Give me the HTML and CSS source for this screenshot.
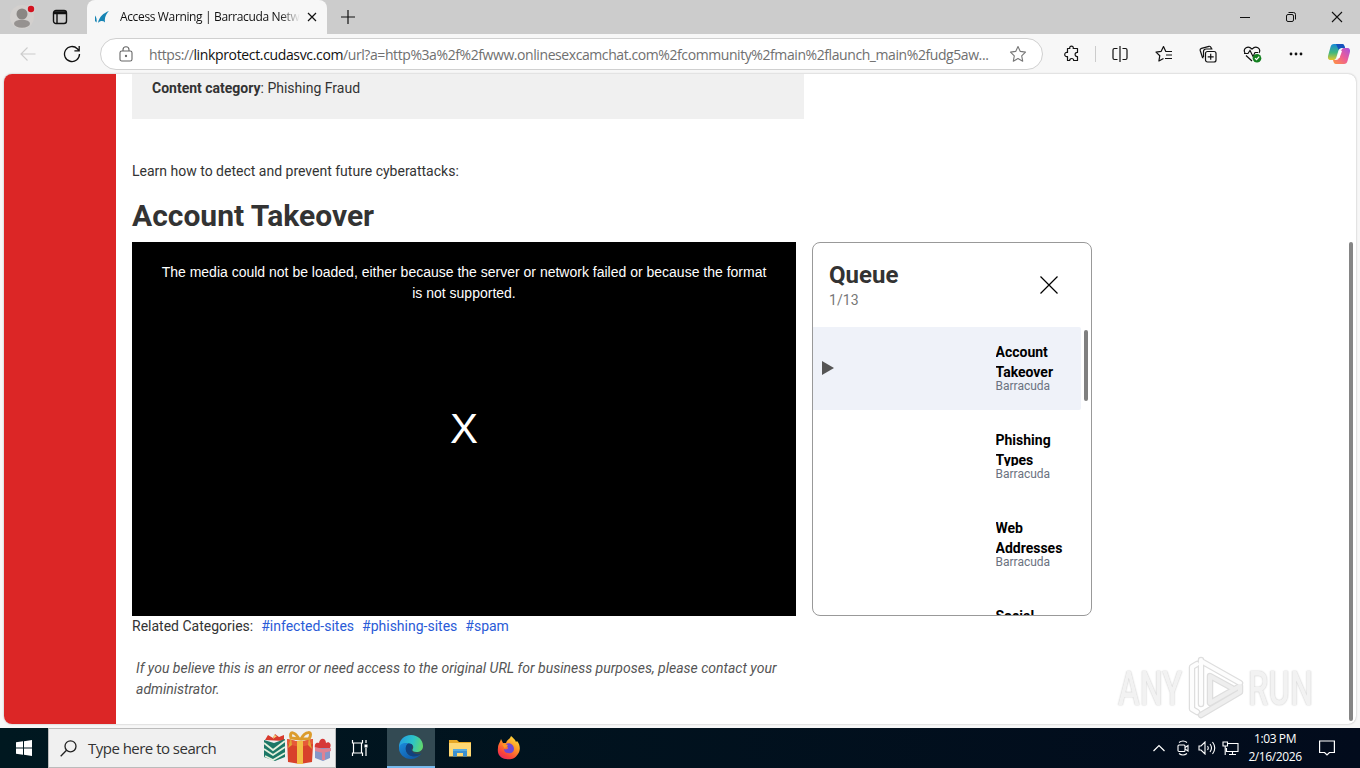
FILE: index.html
```html
<!DOCTYPE html>
<html lang="en">
<head>
    <meta charset="UTF-8">
    <meta name="viewport" content="width=device-width, initial-scale=1.0">
    <title>Access Warning | Barracuda Networks</title>
    <link rel="stylesheet" href="styles.css">
</head>
<body>

<!-- tab strip -->
<div class="tabbar">
    <div class="profile">
        <svg width="28" height="28" viewBox="0 0 28 28"><circle cx="14" cy="14" r="12" fill="#d3d0ce"/><circle cx="14" cy="11" r="5.500" fill="#8b8784"/><ellipse cx="14" cy="20.700" rx="8" ry="4" fill="#969290"/><circle cx="23" cy="6" r="4.500" fill="#d6d0d0"/><circle cx="23" cy="6" r="3.200" fill="#d3121f"/></svg>
    </div>
    <div class="workspaces">
        <svg width="16" height="16" viewBox="0 0 16 16" fill="none" stroke="#111" stroke-width="1.400"><rect x="1.500" y="1.500" width="13" height="13" rx="2.500"/><path d="M1.500 4.500h13M5 4.500v10"/><path d="M2 3.200h12" stroke-width="2"/></svg>
    </div>
    <div class="tab">
        <svg class="favicon" width="16" height="16" viewBox="0 0 16 16"><path d="M15 2C9.500 4 5 8 4 14C6.500 11.500 9 11.500 11 13.500C10.500 9 11.500 5.500 15 2z" fill="#1684b4"/><path d="M1 6.500C2.500 8.500 3 11 2.500 13.500L1 12z" fill="#1684b4"/></svg>
        <span class="tab-title">Access Warning | Barracuda Netw</span>
        <svg class="tab-close" width="10" height="10" viewBox="0 0 10 10" stroke="#111" stroke-width="1.200"><path d="M1 1l8 8M9 1l-8 8"/></svg>
    </div>
    <svg class="new-tab" width="14" height="14" viewBox="0 0 14 14" stroke="#111" stroke-width="1.200"><path d="M7 0v14M0 7h14"/></svg>
    <div class="window-buttons">
        <span><svg width="12" height="12" viewBox="0 0 12 12" stroke="#111"><path d="M1 6.500h10"/></svg></span>
        <span><svg width="12" height="12" viewBox="0 0 12 12" fill="none" stroke="#111"><rect x="1.500" y="3.500" width="7" height="7" rx="1.500"/><path d="M3.500 1.500h5a2 2 0 0 1 2 2v5"/></svg></span>
        <span><svg width="12" height="12" viewBox="0 0 12 12" stroke="#111" stroke-width="1.100"><path d="M1 1l10 10M11 1L1 11"/></svg></span>
    </div>
</div>

<!-- address bar -->
<div class="toolbar">
    <span class="tool back"><svg width="16" height="16" viewBox="0 0 16 16" fill="none" stroke="#ccc" stroke-width="1.100"><path d="M15.500 8H1M7.500 1.500L1 8l6.500 6.500"/></svg></span>
    <span class="tool"><svg width="18" height="18" viewBox="0 0 18 18" fill="none" stroke="#111" stroke-width="1.300"><path d="M16.500 9a7.500 7.500 0 1 1-2.200-5.300L16 5.500M16.200 1v4.800h-4.800"/></svg></span>
    <div class="address">
        <svg width="14" height="16" viewBox="0 0 14 16" fill="none" stroke="#666" stroke-width="1.100"><rect x="1" y="5" width="12" height="10" rx="1.800"/><path d="M4 5V3.800a3 3 0 0 1 6 0V5"/><circle cx="7" cy="10" r=".6" fill="#666"/></svg>
        <span class="url">https://<b>linkprotect.cudasvc.com</b>/url?a=http%3a%2f%2fwww.onlinesexcamchat.com%2fcommunity%2fmain%2flaunch_main%2fudg5aw...</span>
        <svg class="star" width="18" height="18" viewBox="0 0 18 18" fill="none" stroke="#777" stroke-width="1.100"><path d="M9 1.500l2.300 4.900 5.200.7-3.800 3.700 1 5.400L9 13.600l-4.700 2.600 1-5.400L1.500 7.100l5.200-.7z" stroke-linejoin="round"/></svg>
    </div>
    <span class="tool"><svg width="18" height="18" viewBox="0 0 18 18" fill="none" stroke="#111" stroke-width="1.200" stroke-linejoin="round"><path d="M4.500 3.500h2.300C6 .3 11 .3 10.200 3.500h4.300v4C11.300 7 11.300 12 14.500 11.500v4h-3.800c0-2.700-4-2.700-4 0H4.500v-4C.8 12.300.8 6.700 4.500 7.500z"/></svg></span>
    <span class="divider"></span>
    <span class="tool"><svg width="18" height="18" viewBox="0 0 18 18" fill="none" stroke="#111" stroke-width="1.200"><path d="M9 1v16M6.500 3.500h-3A1.500 1.500 0 0 0 2 5v8a1.500 1.500 0 0 0 1.500 1.500h3M11.500 3.500h3A1.500 1.500 0 0 1 16 5v8a1.500 1.500 0 0 1-1.500 1.500h-3"/></svg></span>
    <span class="tool"><svg width="18" height="18" viewBox="0 0 18 18" fill="none" stroke="#111" stroke-width="1.200" stroke-linejoin="round"><path d="M17 6.500h-6.200L8.500 1.500 6.200 6.300l-5.200.8 3.800 3.600-.9 5.300L8.500 13.500M11 10h6M10 13.500h7"/></svg></span>
    <span class="tool"><svg width="18" height="18" viewBox="0 0 18 18" fill="none" stroke="#111" stroke-width="1.200"><rect x="6.500" y="6.500" width="10.500" height="10.500" rx="2"/><path d="M11.700 8.800v6M8.700 11.800h6M4.500 13L3.500 12.500 1.200 5.500A1.800 1.800 0 0 1 2.500 3.300l7.500-2A1.800 1.800 0 0 1 12 2.500l.5 1.500M4.500 12V6.500A2.500 2.500 0 0 1 7 4h6.500"/></svg></span>
    <span class="tool"><svg width="19" height="18" viewBox="0 0 19 18" fill="none" stroke="#111" stroke-width="1.200"><path d="M2 8C-.5 3.500 5 0 9 4.200 13 0 18.500 3.500 16 8M3 10.500L9 16M1 8.500h4l2-3 3 6 2-4h3"/><circle cx="14" cy="13.200" r="4.300" fill="#148020" stroke="none"/><path d="M12 13.200l1.500 1.500 2.700-3" stroke="#fff"/></svg></span>
    <span class="tool"><svg width="16" height="4" viewBox="0 0 16 4" fill="#111"><circle cx="3" cy="2" r="1.400"/><circle cx="8" cy="2" r="1.400"/><circle cx="13" cy="2" r="1.400"/></svg></span>
    <span class="tool copilot"><svg width="24" height="22" viewBox="0 0 24 22">
        <defs>
            <linearGradient id="cpLeft" x1="0" y1="0" x2="0" y2="1"><stop offset="0" stop-color="#168bd8"/><stop offset=".55" stop-color="#43b87c"/><stop offset="1" stop-color="#e5c72c"/></linearGradient>
            <linearGradient id="cpRight" x1="1" y1="0" x2="0" y2="1"><stop offset="0" stop-color="#a750e0"/><stop offset=".5" stop-color="#ee5e94"/><stop offset="1" stop-color="#ff963d"/></linearGradient>
        </defs>
        <path d="M7 1h8c2 0 2.500 2 3 4h-3.500c-2 0-2.600 1-3.200 3l-2 6.500C8.700 16.500 7.500 17 6 17H4c-3 0-3.500-2-2.700-5L3.500 4C4 2 5 1 7 1z" fill="url(#cpLeft)"/>
        <path d="M9 1h6c2 0 2.500 2 3 4h-3.500c-1.500 0-2.300.7-2.800 2z" fill="#1752bd"/>
        <path d="M17 21H9c-2 0-2.500-2-3-4h3c2 0 2.700-1 3.300-3l2-6.500C15 5.500 16 5 18 5h2c3 0 3.500 2 2.700 5l-2.200 8c-.5 2-1.500 3-3.500 3z" fill="url(#cpRight)"/>
        <path d="M12.500 8h2.500l-2.500 7H10z" fill="#fff"/>
    </svg></span>
</div>

<!-- page -->
<div class="page">
    <div class="red-bar"></div>
    <div class="content">
        <div class="category"><b>Content category</b>: Phishing Fraud</div>
        <p class="learn">Learn how to detect and prevent future cyberattacks:</p>
        <h1>Account Takeover</h1>
        <div class="media">
            <div class="video">
                <p>The media could not be loaded, either because the server or network failed or because the format is not supported.</p>
                <div class="video-x">X</div>
            </div>
            <div class="queue">
                <div class="queue-head">
                    <div>
                        <h2>Queue</h2>
                        <div class="count">1/13</div>
                    </div>
                    <svg width="18" height="18" viewBox="0 0 18 18" stroke="#000" stroke-width="1.200"><path d="M.5.5l17 17M17.500.5l-17 17"/></svg>
                </div>
                <div class="queue-body">
                    <div class="queue-list">
                        <div class="item active">
                            <svg class="play" width="12" height="14" viewBox="0 0 12 14"><path d="M0 0l12 7-12 7z" fill="#555"/></svg>
                            <div class="info"><div class="title">Account Takeover</div><div class="by">Barracuda</div></div>
                        </div>
                        <div class="item">
                            <div class="info"><div class="title">Phishing Types</div><div class="by">Barracuda</div></div>
                        </div>
                        <div class="item">
                            <div class="info"><div class="title">Web Addresses</div><div class="by">Barracuda</div></div>
                        </div>
                        <div class="item">
                            <div class="info"><div class="title">Social</div></div>
                        </div>
                    </div>
                    <div class="queue-scroll"></div>
                </div>
            </div>
        </div>
        <div class="related">Related Categories: <a>#infected-sites</a><a>#phishing-sites</a><a>#spam</a></div>
        <p class="note">If you believe this is an error or need access to the original URL for business purposes, please contact your administrator.</p>
    </div>
    <div class="page-scroll"></div>
    <div class="watermark">
        <span>ANY</span>
        <svg width="58" height="64" viewBox="0 0 58 64" fill="none" stroke-linejoin="round">
            <path d="M11 8L6 11v42l5 3M15 4v44M15 5l39 22M15 59l39-23V30L24 47V20l22 12" stroke="#dedede" stroke-width="6.500" stroke-linecap="round"/>
            <path d="M11 8L6 11v42l5 3M15 4v44M15 5l39 22" stroke="#fdfdfd" stroke-width="4" stroke-linecap="round"/>
            <path d="M15 59l39-23V30L24 47V20l22 12" stroke="#eee" stroke-width="4" stroke-linecap="round"/>
        </svg>
        <span>RUN</span>
    </div>
</div>

<!-- taskbar -->
<div class="taskbar">
    <div class="start"><svg width="16" height="16" viewBox="0 0 16 16" fill="#fff"><path d="M0 2.300L7 1.300V7.500H0zM8 1.200L16 0v7.500H8zM0 8.500h7v6.200l-7-1zM8 8.500h8V16l-8-1.200z"/></svg></div>
    <div class="search">
        <svg width="17" height="17" viewBox="0 0 17 17" fill="none" stroke="#222" stroke-width="1.300"><circle cx="10.500" cy="6.300" r="5.500"/><path d="M6.500 10.300L.7 16.200"/></svg>
        <span>Type here to search</span>
        <svg class="gifts" width="70" height="34" viewBox="0 0 70 34">
            <path d="M3 9l3-5 5 3 2-4 4 3 5-2v6z" fill="#d8392c"/>
            <path d="M11 8l1-4 3 1z" fill="#f3d27a"/>
            <path d="M2 9l10 3 11-4v18l-10 4-11-4z" fill="#1c7766"/>
            <path d="M2 12l9 7 12-9M2 18l9 6 12-8M3 25l8 4 12-7" fill="none" stroke="#e4f0dc" stroke-width="1.800"/>
            <path d="M37 8C33 1 27-1 29 7zM39 8c4-8 13-9 8 0z" fill="none" stroke="#dc9c2c" stroke-width="3"/>
            <path d="M25 8l13 3 13-3v6l-1 17-12 2-12-2z" fill="#d8412b"/>
            <path d="M25 8l13 3 13-3v5l-13 3-13-3z" fill="#e65a38"/>
            <path d="M35 10h6v23h-6z" fill="#f2bd45"/>
            <path d="M29 6l-3 11 4-3zM47 6l3 12-4-4z" fill="#e0a535"/>
            <path d="M53 17c-1-5 2-6 4-5 1-6 7-5 7 0 3-2 6 1 4 5z" fill="#d63838"/>
            <path d="M53 17h15v10l-7 3-8-3z" fill="#8496c8"/>
            <path d="M53 16l8 2 8-1v3l-8 2-8-2zM60 18h3v11h-3z" fill="#df8292"/>
        </svg>
    </div>
    <div class="app taskview"><svg width="17" height="16" viewBox="0 0 17 16" fill="none" stroke="#fff" stroke-width="1.200"><path d="M1.500 0v3h10V0M1.500 16v-3h10v3M2.500 3v10M10.500 3v10M15 0v3M15 8v8"/><path d="M13.500 4.500h3v3h-3z" fill="#fff" stroke="none"/></svg></div>
    <div class="app edge"><svg width="26" height="26" viewBox="0 0 26 26">
        <defs>
            <linearGradient id="edgeTop" x1="0" y1=".4" x2="1" y2=".6"><stop offset="0" stop-color="#249ee2"/><stop offset=".55" stop-color="#2cc4c8"/><stop offset="1" stop-color="#62d86a"/></linearGradient>
            <linearGradient id="edgeLow" x1="0" y1="0" x2="1" y2="1"><stop offset="0" stop-color="#1b8bdc"/><stop offset="1" stop-color="#0c4d9b"/></linearGradient>
        </defs>
        <path d="M1 13C1 6 6 1 13 1s12 5 12 11c0 4-3 6-6.500 6-3 0-4.500-1-4-2.500 2-3 0-6-4-6C5 9.500 1 13 1 18z" fill="url(#edgeTop)"/>
        <path d="M1 14c.5-4 5-6 9.500-4.500C7 12 7 18 11 21c4 2.500 9 1.500 12.500-1.500C21 23 17 25 13 25 6 25 1 20 1 14z" fill="url(#edgeLow)"/>
        <path d="M10.500 9.500C7 11 6.500 17 10.500 20.500c4 3 9 2 13-1-4 2-9 0-10-3-.6-2 1-3 1-4.500 0-1.400-1.500-2.700-4-2.500z" fill="#11417f"/>
    </svg></div>
    <div class="app"><svg width="22" height="18" viewBox="0 0 22 18"><path d="M0 1h8l2 2h12v14H0z" fill="#e8a825"/><path d="M0 4h22v13.500H0z" fill="#ffd873"/><path d="M4 17.500V10h14v7.500h-4V14H8v3.500z" fill="#3b90d0"/><path d="M4 10h14v2H4z" fill="#58abe0"/></svg></div>
    <div class="app"><svg width="24" height="24" viewBox="0 0 24 24">
        <defs><linearGradient id="fox" x1=".8" y1="0" x2=".2" y2="1"><stop offset="0" stop-color="#ffe33e"/><stop offset=".4" stop-color="#ff9526"/><stop offset=".8" stop-color="#fa3f3c"/><stop offset="1" stop-color="#e42867"/></linearGradient></defs>
        <path d="M4 3l2 4 3 0c1-3 4-4 5-7 2 2 4 3 5 6l1-1c3 3 4 9 1 13-3 5-8 6-12 5C3 22 0 18 1 12 1 8 3 7 4 3z" fill="url(#fox)"/>
        <path d="M9 8c4-2 8 1 8 5 0 3-3 5-6 4-3 0-4-2-4-4 2 1 4 0 4-1z" fill="#7048d4"/>
        <path d="M5 8l6 1c-1 2-3 2-3 4z" fill="#ff9a22"/>
    </svg></div>
    <div class="tray">
        <svg class="chevron" width="12" height="8" viewBox="0 0 12 8" fill="none" stroke="#fff" stroke-width="1.200"><path d="M.5 7L6 1.500 11.500 7"/></svg>
        <svg class="meet" width="12" height="16" viewBox="0 0 12 16" fill="none" stroke="#fff" stroke-width="1.100"><rect x="1" y="5" width="7" height="6.500" rx="1"/><path d="M8 7.500l3-2v5.500l-3-2M2 2.500Q6-.5 10 2.500M2 13.500q4 3 8 0"/></svg>
        <svg class="volume" width="18" height="14" viewBox="0 0 18 14" fill="none" stroke="#fff" stroke-width="1.100"><path d="M1 5h2l4-4v12L3 9H1zM9.500 5q1.500 2 0 4M12 3q3 4 0 8M14.500 1q4.500 6 0 12"/></svg>
        <svg class="network" width="17" height="14" viewBox="0 0 17 14" fill="none" stroke="#fff" stroke-width="1.100"><path d="M6 2.500h10v8H4.500V7M7 13.500h7M10.500 10.500v3M1 1h4.500v4H1zM3.200 5v9"/></svg>
        <div class="clock">1:03 PM<br>2/16/2026</div>
        <svg class="notify" width="16" height="16" viewBox="0 0 16 16" fill="none" stroke="#fff" stroke-width="1.200"><path d="M.6 1h14.800v11.500h-5L8 15l-2.400-2.500h-5z"/></svg>
    </div>
</div>

</body>
</html>
```
FILE: styles.css
```css
* {
    box-sizing: border-box;
}

body {
    margin: 0;
    width: 1360px;
    height: 768px;
    overflow: hidden;
    display: flex;
    flex-direction: column;
    background: #f7f7f7;
    font-family: Roboto, sans-serif;
    font-size: 14px;
    color: #333;
}

svg {
    flex: none;
    display: block;
}

h1, h2, p {
    margin: 0;
}

/* tab strip */
.tabbar {
    height: 34px;
    flex: none;
    display: flex;
    align-items: center;
    background: #ccc;
}

.profile {
    width: 44px;
    padding-left: 8px;
}

.workspaces {
    width: 43px;
    padding-left: 8px;
}

.tab {
    width: 240px;
    height: 34px;
    display: flex;
    align-items: center;
    padding: 0 10px 0 7px;
    border-radius: 8px 8px 0 0;
    background: #f7f7f7;
}

.tab-title {
    width: 180px;
    margin-left: 10px;
    white-space: nowrap;
    font-family: "Open Sans", sans-serif;
    font-size: 12px;
    line-height: 18px;
    letter-spacing: -0.36px;
    color: #111;
    -webkit-mask-image: linear-gradient(to right, #000 160px, transparent 180px);
    mask-image: linear-gradient(to right, #000 160px, transparent 180px);
}

.tab-close {
    margin-left: auto;
}

.new-tab {
    margin-left: 14px;
}

.window-buttons {
    display: flex;
    margin-left: auto;
}

.window-buttons span {
    width: 46px;
    display: flex;
    justify-content: center;
}

/* address bar */
.toolbar {
    height: 40px;
    flex: none;
    display: flex;
    align-items: center;
    background: #f7f7f7;
}

.tool {
    width: 44px;
    flex: none;
    display: flex;
    justify-content: center;
}

.back {
    margin-left: 6px;
}

.address {
    width: 943px;
    height: 32px;
    margin: 0 7px 0 6px;
    padding: 0 15px 0 18px;
    display: flex;
    align-items: center;
    border: 1px solid #d0d0d0;
    border-radius: 16px;
    background: #fff;
}

.url {
    margin-left: 16px;
    white-space: nowrap;
    font-family: "Open Sans", sans-serif;
    font-size: 14px;
    letter-spacing: -0.42px;
    color: #707070;
}

.url b {
    font-weight: 400;
    letter-spacing: -0.35px;
    color: #111;
}

.star {
    margin-left: auto;
}

.divider {
    width: 1px;
    height: 16px;
    margin: 0 2px 0 1px;
    background: #ccc;
}

.copilot {
    width: 41px;
}

/* page */
.page {
    position: relative;
    height: 650px;
    flex: none;
    margin: 0 4px 4px;
    display: flex;
    overflow: hidden;
    border-radius: 8px;
    background: #fff;
    box-shadow: 0 0 2px #aaa;
}

.red-bar {
    width: 112px;
    background: #dc2626;
}

.content {
    width: 976px;
    margin-left: 16px;
}

.category {
    width: 672px;
    height: 45px;
    padding: 4px 20px;
    background: #f0f0f0;
    line-height: 21px;
}

.learn {
    margin-top: 42px;
    line-height: 21px;
}

h1 {
    margin: 15px 0 7px;
    font-size: 30px;
    line-height: 38px;
}

.media {
    display: flex;
    gap: 16px;
    width: 960px;
    height: 374px;
}

.video {
    width: 664px;
    padding: 20px 28px;
    background: #000;
    color: #fff;
    text-align: center;
    line-height: 21px;
    font-family: "Liberation Sans", Arial, sans-serif;
}

.video-x {
    margin-top: 97px;
    font-size: 42px;
    line-height: 56px;
}

.queue {
    width: 280px;
    overflow: hidden;
    border: 1px solid #999;
    border-radius: 8px;
}

.queue-head {
    height: 84px;
    display: flex;
    justify-content: space-between;
    align-items: center;
    padding: 0 33px 0 16px;
}

.queue-head h2 {
    margin-top: 2px;
    font-size: 24px;
    line-height: 28px;
}

.count {
    line-height: 23px;
    letter-spacing: 0.1px;
    color: #777;
}

.queue-body {
    display: flex;
}

.queue-list {
    width: 268px;
    display: flex;
    flex-direction: column;
    gap: 5px;
}

.item {
    height: 83px;
    display: flex;
    align-items: center;
    padding: 0 9px;
}

.active {
    background: #eff2f9;
    border-radius: 0 2px 2px 0;
}

.play {
    margin-bottom: 2px;
}

.info {
    width: 76.5px;
    height: 53px;
    margin-left: auto;
}

.title {
    height: 36px;
    overflow: hidden;
    font-weight: 700;
    line-height: 20px;
    color: #000;
}

.by {
    font-size: 12px;
    line-height: 16px;
    color: #6b7280;
}

.queue-scroll {
    width: 4px;
    height: 71px;
    margin: 3px 0 0 3px;
    border-radius: 2px;
    background: #808080;
}

.related {
    line-height: 21px;
}

.related a {
    margin-left: 8px;
    color: #2a5bd7;
}

.related a:first-child {
    margin-left: 4.5px;
}

.note {
    width: 660px;
    margin: 21px 0 0 4px;
    font-style: italic;
    line-height: 21px;
    color: #555;
}

.page-scroll {
    width: 4px;
    height: 479px;
    margin: 168px 3px 0 auto;
    border-radius: 2px;
    background: #858585;
}

.watermark {
    position: absolute;
    right: 44px;
    bottom: 4px;
    display: flex;
    align-items: center;
    gap: 4px;
    color: #f2f2f2;
    font-size: 48px;
    font-weight: 500;
    text-shadow: 0 0 2px #bbb;
}

.watermark span {
    width: 64px;
    transform: scaleX(0.68);
    transform-origin: left;
}

/* taskbar */
.taskbar {
    height: 40px;
    flex: none;
    display: flex;
    align-items: center;
    background: linear-gradient(to right, #001820, #020b1c);
}

.start {
    width: 48px;
    padding-left: 16px;
}

.search {
    width: 288px;
    height: 40px;
    display: flex;
    align-items: center;
    padding: 0 3px 0 11px;
    border: 1px solid #bbb;
    background: #f0f0f0;
    font-family: "Open Sans", sans-serif;
    font-size: 15px;
    color: #333;
}

.search span {
    margin-left: 11px;
    white-space: nowrap;
    letter-spacing: -0.52px;
}

.gifts {
    margin-left: auto;
}

.app {
    width: 49px;
    height: 40px;
    display: flex;
    align-items: center;
    justify-content: center;
}

.taskview {
    width: 51px;
    padding-right: 4px;
}

.edge {
    width: 48px;
    background: #334a53;
    border-bottom: 2px solid #76b9ed;
}

.tray {
    display: flex;
    align-items: center;
    margin-left: auto;
    padding-right: 25px;
}

.meet {
    margin-left: 12px;
}

.volume {
    margin-left: 9px;
}

.network {
    margin-left: 6px;
}

.clock {
    width: 72px;
    text-align: center;
    font-family: "Open Sans", sans-serif;
    font-size: 12px;
    line-height: 18px;
    letter-spacing: -0.4px;
    color: #fff;
}

.notify {
    margin-left: 8px;
}
```
